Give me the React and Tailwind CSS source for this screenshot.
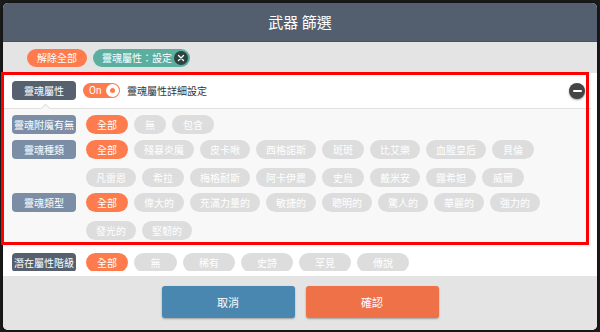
const FONT = { fontFamily: '"Noto Sans CJK TC", "Noto Sans", sans-serif' };

function Chip({ label, active, w }) {
  return (
    <span
      className={`h-[19px] px-[10px] rounded-full flex items-center justify-center text-[10px] leading-none text-white ${
        active ? "bg-[#fe7b4e]" : "bg-[#dddddd]"
      } ${w || "min-w-[42px]"}`}
    >
      {label}
    </span>
  );
}

function FilterRow({ label, items, dark }) {
  return (
    <div className="flex items-start gap-[10px]">
      <span
        className={`w-[64px] h-[19px] shrink-0 rounded-[4px] flex items-center justify-center text-[10px] leading-none text-white ${
          dark ? "bg-[#56606e]" : "bg-[#7b8ea6]"
        }`}
      >
        {label}
      </span>
      <div className="flex flex-wrap gap-x-[6px] gap-y-[9px] flex-1">
        {items.map((it, i) => (
          <Chip key={it.l} label={it.l} active={i === 0} w={it.w} />
        ))}
      </div>
    </div>
  );
}

const list = (arr) => arr.map((l) => ({ l }));

export default function App() {
  return (
    <div className="relative w-[600px] h-[332px] bg-[#1c1c1c] p-[3px] pb-[2px]" style={FONT}>
      <div className="h-full rounded-[5px] overflow-hidden flex flex-col bg-white shadow-[0_0_4px_rgba(0,0,0,0.6)]">
        {/* header */}
        <div className="h-[39px] shrink-0 bg-[#535f6e] border-b border-[#48525f] flex items-center justify-center text-white text-[15px]">
          武器 篩選
        </div>

        {/* active filters */}
        <div className="h-[31px] shrink-0 bg-[#e4e4e4] flex items-center gap-[6px] pl-[24px]">
          <span className="h-[18px] px-[10px] rounded-full bg-[#fe7b4e] text-white text-[10px] leading-none flex items-center">
            解除全部
          </span>
          <span className="h-[18px] pl-[9px] pr-[2px] rounded-full bg-[#5cae9f] text-white text-[10px] leading-none flex items-center gap-[2px]">
            靈魂屬性：設定
            <span className="w-[14px] h-[14px] rounded-full bg-[#2c4541] flex items-center justify-center">
              <svg width="8" height="8" viewBox="0 0 8 8">
                <path d="M1.5 1.5l5 5M6.5 1.5l-5 5" stroke="white" strokeWidth="1.3" strokeLinecap="round" />
              </svg>
            </span>
          </span>
        </div>

        {/* content */}
        <div className="flex-1 overflow-hidden bg-white pr-[6px]">
          <div className="h-[36px] flex items-center pl-[9px] pr-[4px] border-b border-[#e2e2e2]">
            <span className="w-[64px] h-[19px] rounded-[4px] bg-[#56606e] flex items-center justify-center text-[10px] leading-none text-white">
              靈魂屬性
            </span>
            <span className="ml-[7px] w-[37px] h-[15px] rounded-full bg-[#fe7b4e] flex items-center justify-between pl-[6px] pr-[1px]">
              <span className="text-white text-[10px] leading-none" style={{ fontFamily: '"Roboto", sans-serif' }}>On</span>
              <span className="w-[13px] h-[13px] rounded-full bg-white flex items-center justify-center">
                <span className="w-[5px] h-[5px] rounded-full bg-[#fe7b4e]" />
              </span>
            </span>
            <span className="ml-[7px] text-[10px] text-[#333]">靈魂屬性詳細設定</span>
            <span className="ml-auto mr-[2px] w-[16px] h-[16px] rounded-full bg-[#444] shadow-[0_1px_2px_rgba(0,0,0,0.4)] flex items-center justify-center">
              <span className="w-[9px] h-[2px] bg-white rounded-sm" />
            </span>
          </div>

          <div className="relative bg-[#f8f8f8] pl-[9px] pr-[30px] pt-[6px] pb-[6px] flex flex-col gap-[6px]">
            <span className="absolute left-[39px] -top-[4px] w-[7px] h-[7px] rotate-45 bg-[#f8f8f8] border-l border-t border-[#e2e2e2]" />
            <FilterRow label="靈魂附魔有無" items={[{ l: "全部" }, { l: "無", w: "min-w-[32px]" }, { l: "包含" }]} />
            <FilterRow
              label="靈魂種類"
              items={list(["全部", "殘暴炎魔", "皮卡啾", "西格諾斯", "斑斑", "比艾樂", "血腥皇后", "貝倫", "凡雷恩", "希拉", "梅格耐斯", "阿卡伊農", "史烏", "戴米安", "露希妲", "威爾"])}
            />
            <FilterRow
              label="靈魂類型"
              items={list(["全部", "偉大的", "充滿力量的", "敏捷的", "聰明的", "驚人的", "華麗的", "強力的", "發光的", "堅韌的"])}
            />
          </div>

          <div className="pt-[7px] pl-[9px]">
            <FilterRow
              dark
              label="潛在屬性階級"
              items={[
                { l: "全部" },
                { l: "無", w: "min-w-[43px]" },
                { l: "稀有", w: "min-w-[52px]" },
                { l: "史詩", w: "min-w-[52px]" },
                { l: "罕見", w: "min-w-[52px]" },
                { l: "傳說", w: "min-w-[52px]" },
              ]}
            />
          </div>
        </div>
        <div className="h-[5px] shrink-0 bg-white" />

        {/* footer */}
        <div className="h-[54px] shrink-0 bg-[#e4e4e4] flex justify-center gap-[11px] pt-[10px]">
          <button className="w-[133px] h-[32px] rounded-[3px] bg-[#4a87b0] text-white text-[11px] shadow-[0_1px_2px_rgba(0,0,0,0.3)]">
            取消
          </button>
          <button className="w-[133px] h-[32px] rounded-[3px] bg-[#ef7148] text-white text-[11px] shadow-[0_1px_2px_rgba(0,0,0,0.3)]">
            確認
          </button>
        </div>
      </div>

      {/* highlight overlay */}
      <div className="absolute left-[1px] top-[72px] w-[588px] h-[173px] border-[3px] border-[#ff0000] pointer-events-none" />
    </div>
  );
}
